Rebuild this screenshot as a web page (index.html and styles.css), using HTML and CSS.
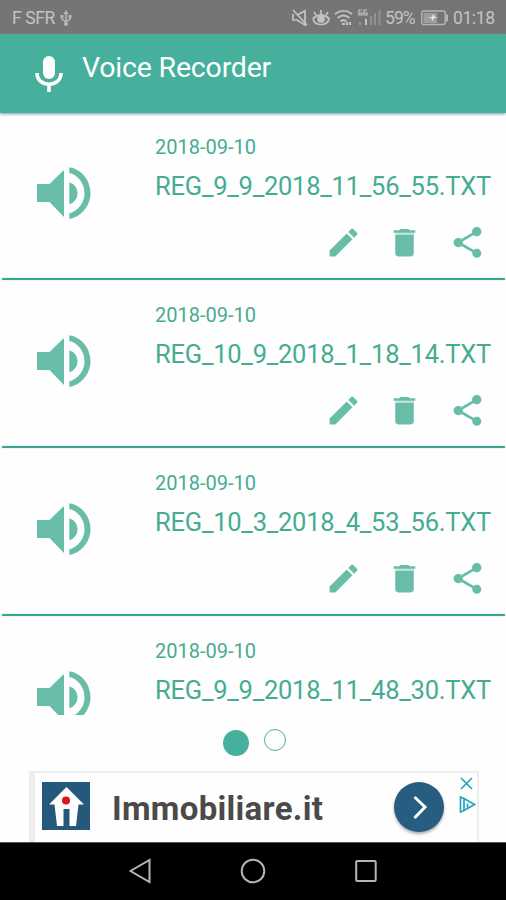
FILE: index.html
```html
<!DOCTYPE html>
<html lang="en">
<head>
<meta charset="utf-8">
<title>Voice Recorder</title>
<link rel="stylesheet" href="styles.css">
</head>
<body>
<svg class="defs" width="0" height="0">
  <symbol id="speaker" viewBox="0 0 54 52"><path d="M0 17H12.5L27 3V50L12.5 35H0z"/><path d="M32.3 15.3Q40.500 18 40.500 26.200T32.300 37.300z"/><path d="M32.300.300C44 2 53.500 13 53.500 26S44 50 32.300 52V46.400C41 44 47.500 36 47.500 26S41 8 32.300 5.900z"/></symbol>
  <symbol id="edit" viewBox="0 0 24 24"><path d="M3 17.250V21h3.750L17.810 9.940l-3.750-3.750L3 17.250zM20.710 7.040c.390-.390.390-1.020 0-1.410l-2.340-2.340c-.390-.390-1.020-.390-1.410 0l-1.830 1.830 3.750 3.750 1.830-1.830z"/></symbol>
  <symbol id="trash" viewBox="0 0 24 24"><path d="M6 19c0 1.100.900 2 2 2h8c1.100 0 2-.900 2-2V7H6v12zM19 4h-3.500l-1-.800h-5l-1 .800H5v1.600h14V4z"/><path opacity=".4" d="M6 5.600h12V7H6z"/></symbol>
  <symbol id="share" viewBox="0 0 24 24"><path d="M18 16.080c-.760 0-1.440.300-1.960.770L8.910 12.700c.050-.230.090-.460.090-.700s-.040-.470-.090-.700l7.050-4.110c.540.500 1.250.810 2.040.810 1.660 0 3-1.340 3-3s-1.340-3-3-3-3 1.340-3 3c0 .240.040.470.090.700L8.040 9.810C7.500 9.310 6.790 9 6 9c-1.660 0-3 1.340-3 3s1.340 3 3 3c.790 0 1.500-.310 2.040-.810l7.120 4.160c-.050.210-.080.430-.080.650 0 1.610 1.310 2.920 2.920 2.920s2.920-1.310 2.920-2.920-1.310-2.920-2.920-2.920z"/></symbol>
</svg>
<div class="status">
  <span class="carrier">F SFR</span>
  <svg class="usb" width="12" height="17" viewBox="0 0 12 17"><path d="M6 2v13M2 6v3l4 3 4-3V6" fill="none" stroke="#b8b8b8" stroke-width="1.500"/><path d="M6 0l2.500 4h-5zM.500 5h3v3h-3zM8.500 5h3v3h-3z" fill="#b8b8b8"/><circle cx="6" cy="14" r="2" fill="#b8b8b8"/></svg>
  <svg class="signals" width="92" height="20" viewBox="0 0 92 20" fill="none" stroke="#c3c3c3" stroke-width="1.700">
    <path d="M1 6v6h4l8 5V3L5 7M1 2l14 15"/>
    <path d="M21 10.500q1 6 8 6t8-6q-8-7-16 0M24 7l-2-3M29 6V2M34 7l2-3"/><circle cx="29" cy="11" r="3" fill="#c3c3c3"/>
    <path d="M43 6q9-6.500 17 0M45.500 10q6-5 12 0M48.500 13.500q3-2.500 6 0"/><path d="M50 16h3M55 14v3M58 14v3" stroke-width="2"/>
    <path d="M70 2h-3v5h3V5h-2M75 2h-3v5h3V5h-2" stroke-width="1.200"/><path d="M68 14v3" stroke="#949494" stroke-width="2"/><path d="M74 11v6" stroke-width="2"/><path d="M79 8v9M83 5v12M87.500 2v15" stroke="#919191" stroke-width="2"/>
  </svg>
  <span class="percent">59%</span>
  <svg class="battery" width="28" height="16" viewBox="0 0 28 16"><rect x=".700" y="1" width="23.500" height="13.500" rx="2" fill="none" stroke="#b5b5b5" stroke-width="1.400"/><path d="M2.500 3H16v10H2.500z" fill="#9d9d9d"/><path d="M25 4.500h2v7h-2z" fill="#b5b5b5"/><path d="M6 8l5-1 1-3 2 3h4l-5 1-1 3-2-3z" fill="#e8e8e8"/></svg>
  <span class="clock">01:18</span>
</div>
<header class="bar">
  <svg width="28" height="38" viewBox="0 0 28 38"><rect x="8" y="1" width="12" height="23" rx="6" fill="#fff"/><path d="M2 18c0 15 24 15 24 0M14 29v8" fill="none" stroke="#fff" stroke-width="3.600"/></svg>
  <h1>Voice Recorder</h1>
</header>
<main class="list">
  <article class="row">
    <svg class="speaker"><use href="#speaker"/></svg>
    <div class="info"><time>2018-09-10</time><div class="name">REG_9_9_2018_11_56_55.TXT</div>
    <div class="actions"><svg><use href="#edit"/></svg><svg><use href="#trash"/></svg><svg><use href="#share"/></svg></div></div>
  </article>
  <article class="row">
    <svg class="speaker"><use href="#speaker"/></svg>
    <div class="info"><time>2018-09-10</time><div class="name">REG_10_9_2018_1_18_14.TXT</div>
    <div class="actions"><svg><use href="#edit"/></svg><svg><use href="#trash"/></svg><svg><use href="#share"/></svg></div></div>
  </article>
  <article class="row">
    <svg class="speaker"><use href="#speaker"/></svg>
    <div class="info"><time>2018-09-10</time><div class="name">REG_10_3_2018_4_53_56.TXT</div>
    <div class="actions"><svg><use href="#edit"/></svg><svg><use href="#trash"/></svg><svg><use href="#share"/></svg></div></div>
  </article>
  <article class="row">
    <svg class="speaker"><use href="#speaker"/></svg>
    <div class="info"><time>2018-09-10</time><div class="name">REG_9_9_2018_11_48_30.TXT</div></div>
  </article>
</main>
<div class="pager"><span class="dot on"></span><span class="dot"></span></div>
<aside class="ad">
  <svg class="logo" width="48" height="48" viewBox="0 0 48 48"><path fill="#24597c" d="M0 0h48v48H0z"/><path fill="#fff" d="M24.500 5L42 22.500h-5.500L34 44h-6.500V27h-6v17H15l-2.500-21.500H7z"/><circle cx="24" cy="18.500" r="4" fill="#d9141c"/></svg>
  <strong>Immobiliare.it</strong>
  <span class="go"><svg width="50" height="50" viewBox="0 0 50 50"><path d="M20.500 15L31 25 20.500 36" fill="none" stroke="#fff" stroke-width="3"/></svg></span>
  <svg class="choices" width="18" height="40" viewBox="0 0 18 40" fill="none" stroke="#20a6bd" stroke-width="1.700"><path d="M2 2l11 11M13 2L2 13M5 22.500L1.500 21v15L5 34.500zM5 22.500L15.500 28.500 5 34.500M8.500 27.500v4"/></svg>
</aside>
<nav class="nav">
  <svg width="22" height="26" viewBox="0 0 22 26"><path d="M20.500 2v22L1.500 13z"/></svg>
  <svg width="26" height="26" viewBox="0 0 26 26"><circle cx="13" cy="13" r="11.300"/></svg>
  <svg width="22" height="26" viewBox="0 0 22 26"><rect x="1.200" y="3" width="19.500" height="20" rx="1"/></svg>
</nav>
</body>
</html>
```
FILE: styles.css
```css
* { box-sizing: border-box; }
body { margin: 0; width: 506px; height: 900px; overflow: hidden; background: #fefefe; font-family: Roboto, sans-serif; display: flex; flex-direction: column; }
svg { display: block; flex: none; }
.defs { position: absolute; }
.status { height: 34px; flex: none; background: #757575; color: #c3c3c3; display: flex; align-items: center; padding: 2px 10px 0 12px; font-size: 17.5px; white-space: nowrap; }
.carrier { width: 48px; letter-spacing: -.4px; }
.signals { margin-left: 220px; }
.percent { margin-left: 1px; width: 36px; letter-spacing: -.9px; }
.battery { width: 28px; }
.clock { margin-left: 4px; letter-spacing: -.4px; }
.bar { height: 79px; flex: none; background: #46b09c; color: #fff; display: flex; padding: 21px 0 0 35px; box-shadow: 0 1px 3px #7d95a8; z-index: 1; }
.bar h1 { margin: -5px 0 0 19px; font-size: 28.5px; line-height: 36px; font-weight: 400; letter-spacing: -.2px; white-space: nowrap; }
.list { height: 602px; flex: none; overflow: hidden; }
.row { height: 168px; display: flex; padding: 0 2px 0 37px; color: #45ac92; position: relative; }
.row::after { content: ""; position: absolute; left: 2px; right: 1px; bottom: 1px; height: 2px; background: #3ca491; box-shadow: 0 0 1px #3ca491; border-radius: 1px; }
.speaker { width: 54px; height: 52px; margin-top: 54px; fill: #68bda9; }
.info { margin-left: 64px; flex: 1; padding-top: 23px; }
time { display: block; font-size: 20px; line-height: 23px; }
.name { font-size: 25.5px; line-height: 30px; margin-top: 12px; letter-spacing: -.23px; white-space: nowrap; }
.actions { display: flex; padding-left: 170px; margin-top: 23px; fill: #68bda9; }
.actions svg { width: 37px; height: 37px; }
.actions svg:nth-child(2) { margin-left: 23.5px; }
.actions svg:nth-child(3) { margin-left: 26.5px; }
.pager { height: 56px; flex: none; display: flex; padding: 14px 0 0 223px; }
.dot { width: 22px; height: 22px; border: 1.5px solid #57ac96; border-radius: 50%; margin-left: 15px; }
.dot.on { width: 26px; height: 26px; margin: 1px 0 0; background: #45b09b; border: 0; }
.ad { width: 450px; height: 71px; flex: none; margin-left: 29px; border: solid #ededed; border-width: 2px 2px 0 6px; display: flex; padding: 9px 0 0 7px; }
.ad strong { margin-left: 22px; width: 282px; font-size: 33px; line-height: 54px; font-weight: 700; letter-spacing: .3px; color: #4a4a4a; white-space: nowrap; }
.go { width: 50px; height: 50px; border-radius: 50%; background: #265d80; box-shadow: 0 2px 3px #aaa; }
.choices { margin: -6px 0 0 15px; }
.nav { flex: 1; background: #000; border-top: 1px solid #555; display: flex; padding: 15px 0 0 129px; gap: 89px; fill: none; stroke: #b5b5b5; stroke-width: 2px; }
```
